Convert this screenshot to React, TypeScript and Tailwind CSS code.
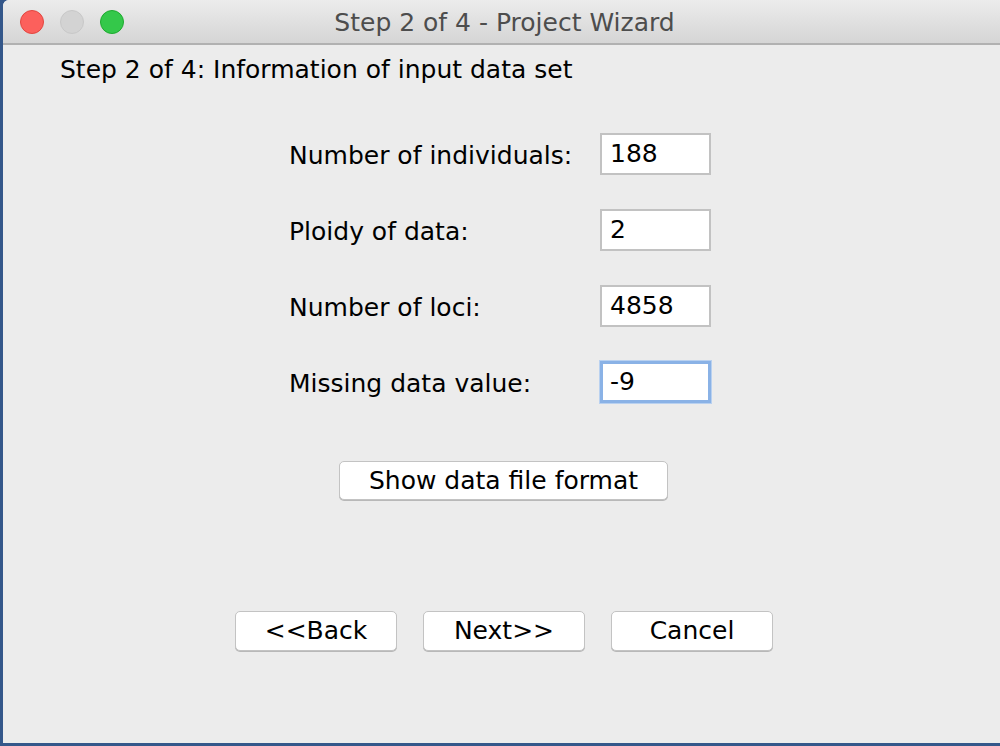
const fields = [
  { label: "Number of individuals:", value: "188" },
  { label: "Ploidy of data:", value: "2" },
  { label: "Number of loci:", value: "4858" },
  { label: "Missing data value:", value: "-9", focused: true },
];

function MacButton({ label, className }: { label: string; className: string }) {
  return (
    <div
      className={`flex items-center justify-center rounded-[5px] border border-[#c3c3c3] bg-white text-[25px] text-black shadow-[0_1px_0_#b8b8b8] ${className}`}
    >
      {label}
    </div>
  );
}

export default function App() {
  return (
    <div
      className="h-[746px] w-[1000px] bg-[#34578a] pb-[3px] pl-[3px]"
      style={{ fontFamily: '"DejaVu Sans", "Noto Sans", sans-serif' }}
    >
      <div className="flex h-full flex-col overflow-hidden rounded-tl-[6px] bg-[#ececec]">
        {/* title bar */}
        <div className="relative flex h-[45px] items-center border-b-[2px] border-[#b1b1b1] bg-gradient-to-b from-[#ececec] to-[#d5d5d5]">
          <div className="flex gap-[16px] pl-[17px]">
            <span className="h-[24px] w-[24px] rounded-full border border-[#e2463f] bg-[#fc605c]" />
            <span className="h-[24px] w-[24px] rounded-full border border-[#c8c8c8] bg-[#d3d3d3]" />
            <span className="h-[24px] w-[24px] rounded-full border border-[#1eaa2f] bg-[#34c84a]" />
          </div>
          <div className="absolute inset-0 flex items-center justify-center pl-[6px] pt-[2px] text-[25px] text-[#4d4d4d]">
            Step 2 of 4 - Project Wizard
          </div>
        </div>

        <div className="pl-[57px] pt-[10px] text-[25px] leading-[30px] text-black">
          Step 2 of 4: Information of input data set
        </div>

        <div className="flex flex-col gap-[34px] pl-[286px] pt-[48px]">
          {fields.map((f) => (
            <div key={f.label} className="flex h-[42px] items-center">
              <div className="w-[311px] pt-[3px] text-[25px] text-black">{f.label}</div>
              <div
                className={`flex h-[42px] w-[111px] items-center bg-white text-[25px] text-black ${
                  f.focused
                    ? "border-[3px] border-[#8ab2e6] pl-[7px] shadow-[0_0_0_1px_#b9d1f0]"
                    : "border-[2px] border-[#c2c2c2] pl-[8px]"
                }`}
              >
                {f.value}
              </div>
            </div>
          ))}
        </div>

        <div className="flex pl-[336px] pt-[58px]">
          <MacButton label="Show data file format" className="h-[39px] w-[329px]" />
        </div>

        <div className="flex gap-[26px] pl-[232px] pt-[111px]">
          <MacButton label="<<Back" className="h-[40px] w-[162px]" />
          <MacButton label="Next>>" className="h-[40px] w-[162px]" />
          <MacButton label="Cancel" className="h-[40px] w-[162px]" />
        </div>
      </div>
    </div>
  );
}
